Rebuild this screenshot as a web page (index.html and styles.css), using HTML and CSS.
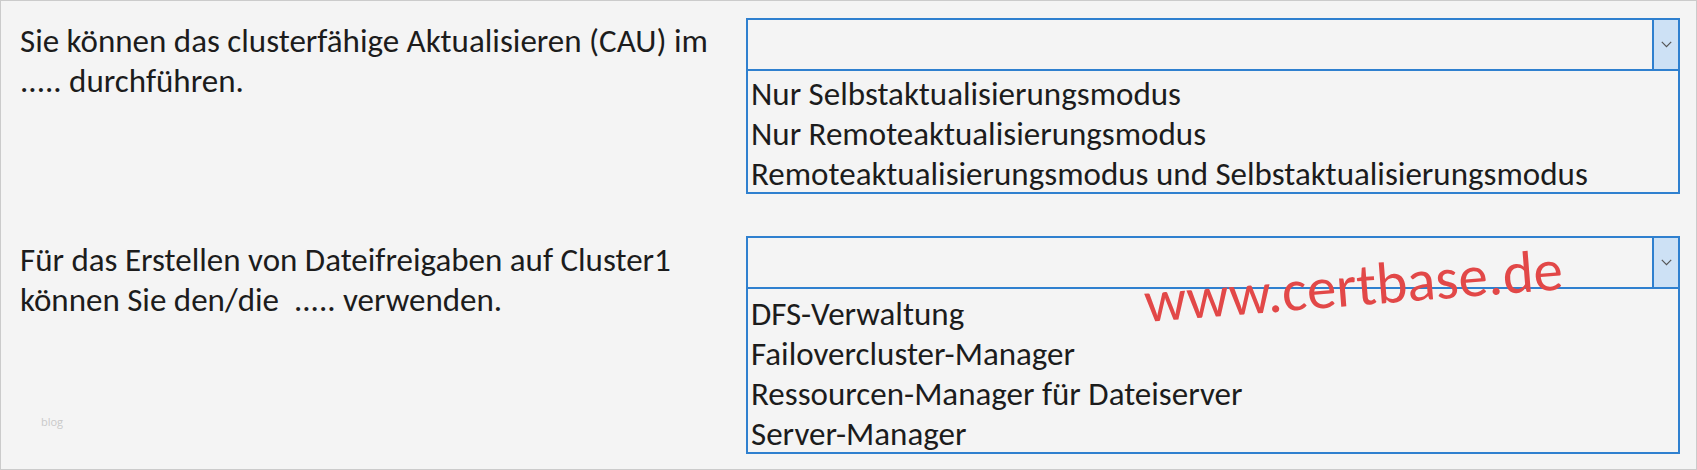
FILE: index.html
```html
<!DOCTYPE html>
<html lang="de">
<head>
<meta charset="utf-8">
<title>CAU</title>
<link rel="stylesheet" href="styles.css">
</head>
<body>
<div class="frame">
  <section class="question q1">
    <p class="prompt">Sie können das clusterfähige Aktualisieren (CAU) im<br>..... durchführen.</p>
    <div class="combo">
      <div class="combo-head">
        <span class="combo-value"></span>
        <span class="combo-btn"><svg width="11" height="7" viewBox="0 0 11 7"><polyline points="0.8,0.8 5.5,5.6 10.2,0.8" fill="none" stroke="#555" stroke-width="1.2"/></svg></span>
      </div>
      <ul class="combo-list">
        <li>Nur Selbstaktualisierungsmodus</li>
        <li>Nur Remoteaktualisierungsmodus</li>
        <li>Remoteaktualisierungsmodus und Selbstaktualisierungsmodus</li>
      </ul>
    </div>
  </section>
  <section class="question q2">
    <p class="prompt">Für das Erstellen von Dateifreigaben auf Cluster1<br>können Sie den/die &nbsp;..... verwenden.</p>
    <div class="combo">
      <div class="combo-head">
        <span class="combo-value"></span>
        <span class="combo-btn"><svg width="11" height="7" viewBox="0 0 11 7"><polyline points="0.8,0.8 5.5,5.6 10.2,0.8" fill="none" stroke="#555" stroke-width="1.2"/></svg></span>
      </div>
      <ul class="combo-list">
        <li>DFS-Verwaltung</li>
        <li>Failovercluster-Manager</li>
        <li>Ressourcen-Manager für Dateiserver</li>
        <li>Server-Manager</li>
      </ul>
    </div>
  </section>
  <span class="blog">blog</span>
  <span class="watermark">www.certbase.de</span>
</div>
</body>
</html>
```

FILE: styles.css
```css
* { box-sizing: border-box; }
html, body { margin: 0; padding: 0; background: #f4f4f4; }
.frame {
  position: relative;
  width: 1697px;
  height: 470px;
  border: 1px solid #cbcbcb;
  background: #f4f4f4;
  padding: 17px 17px 0 19px;
  display: flex;
  flex-direction: column;
  gap: 42px;
  font-family: Carlito, "Lato", "Open Sans", sans-serif;
  font-size: 33px;
  color: #1c1c1c;
}
.question {
  display: grid;
  grid-template-columns: 726px 934px;
}
.prompt { margin: 0; line-height: 40px; white-space: nowrap; }
.q1 .prompt { padding-top: 3px; }
.q2 .prompt { padding-top: 4px; }
.combo { display: flex; flex-direction: column; }
.combo-head {
  height: 53px;
  border: 2px solid #2f80cf;
  display: flex;
  justify-content: flex-end;
}
.combo-value { flex: 1; }
.combo-btn {
  width: 26px;
  background: #cde1f5;
  border-left: 2px solid #2f80cf;
  display: flex;
  align-items: center;
  justify-content: center;
}
.combo-list {
  list-style: none;
  margin: 0;
  height: 123px;
  padding: 3px 0 0 3px;
  border: 2px solid #2f80cf;
  border-top: none;
  line-height: 40px;
  white-space: nowrap;
}
.q2 .combo-list { height: 165px; padding-top: 5px; }
.blog {
  position: absolute;
  left: 40px;
  top: 413px;
  font-family: "Open Sans", sans-serif;
  font-size: 11px;
  color: #c9c9c9;
}
.watermark {
  position: absolute;
  left: 1146px;
  top: 266px;
  font-size: 59px;
  line-height: 1.22;
  color: #e24848;
  transform: rotate(-4.5deg);
  transform-origin: left bottom;
}
```
